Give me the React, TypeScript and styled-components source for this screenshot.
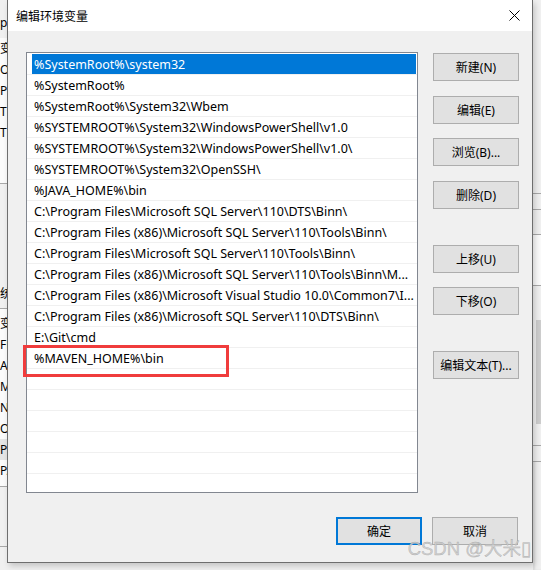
import styled, { createGlobalStyle } from "styled-components";

const GlobalStyle = createGlobalStyle`
  html, body {
    margin: 0;
    padding: 0;
  }
  body {
    width: 541px;
    height: 570px;
    overflow: hidden;
    background: #f0f0f0;
    font-family: "Noto Sans", "Noto Sans CJK SC", sans-serif;
    font-size: 12px;
    color: #000;
  }
  * {
    box-sizing: border-box;
  }
`;

const paths = [
  "%SystemRoot%\\system32",
  "%SystemRoot%",
  "%SystemRoot%\\System32\\Wbem",
  "%SYSTEMROOT%\\System32\\WindowsPowerShell\\v1.0",
  "%SYSTEMROOT%\\System32\\WindowsPowerShell\\v1.0\\",
  "%SYSTEMROOT%\\System32\\OpenSSH\\",
  "%JAVA_HOME%\\bin",
  "C:\\Program Files\\Microsoft SQL Server\\110\\DTS\\Binn\\",
  "C:\\Program Files (x86)\\Microsoft SQL Server\\110\\Tools\\Binn\\",
  "C:\\Program Files\\Microsoft SQL Server\\110\\Tools\\Binn\\",
  "C:\\Program Files (x86)\\Microsoft SQL Server\\110\\Tools\\Binn\\M...",
  "C:\\Program Files (x86)\\Microsoft Visual Studio 10.0\\Common7\\I...",
  "C:\\Program Files (x86)\\Microsoft SQL Server\\110\\DTS\\Binn\\",
  "E:\\Git\\cmd",
  "%MAVEN_HOME%\\bin",
];

const ROW_COUNT = 21;

function EditEnvDialog() {
  const rows = Array.from({ length: ROW_COUNT }, (_, i) => paths[i] ?? "");

  return (
    <Dialog>
      <TitleBar>
        <Title>编辑环境变量</Title>
        <CloseButton aria-label="close">
          <svg width="11" height="11" viewBox="0 0 11 11">
            <path d="M0.5 0.5 L10.5 10.5 M10.5 0.5 L0.5 10.5" stroke="#000" strokeWidth="1" fill="none" />
          </svg>
        </CloseButton>
      </TitleBar>
      <Body>
        <MainRow>
          <ListFrame>
            <ListBox>
              {rows.map((text, i) => (
                <Row key={i}>
                  <RowText $selected={i === 0}>{text}</RowText>
                </Row>
              ))}
            </ListBox>
            <Marker />
          </ListFrame>
          <SideButtons>
            <Button>新建(N)</Button>
            <Button>编辑(E)</Button>
            <Button>浏览(B)...</Button>
            <Button>删除(D)</Button>
            <Button $pushed>上移(U)</Button>
            <Button>下移(O)</Button>
            <Button $pushed>编辑文本(T)...</Button>
          </SideButtons>
        </MainRow>
        <Footer>
          <Button $primary>确定</Button>
          <Button>取消</Button>
        </Footer>
      </Body>
      <Watermark>CSDN @大米▯</Watermark>
    </Dialog>
  );
}

// bits of the window lying behind the dialog
const leftTop = ["变", "O", "Pa", "TE", "TN"];
const leftBottom = ["变", "FP", "A", "M", "N", "O", "Pa", "PA"];

function App() {
  return (
    <>
      <GlobalStyle />
      <Screen>
        <LeftPeek>
          <PeekSection $height={38} $pad={12}>
            <PeekRow>p</PeekRow>
          </PeekSection>
          <PeekSection $height={146} $pad={0} $white $line>
            {leftTop.map((t, i) => (
              <PeekRow key={i}>{t}</PeekRow>
            ))}
          </PeekSection>
          <PeekSection $height={125} $pad={99} $line>
            <PeekRow>统</PeekRow>
          </PeekSection>
          <PeekSection $height={178} $pad={4} $white $line>
            {leftBottom.map((t, i) => (
              <PeekRow key={i} $hover={t === "Pa"}>
                {t}
              </PeekRow>
            ))}
          </PeekSection>
          <PeekSection $height={60} $pad={0} $line />
        </LeftPeek>
        <EditEnvDialog />
        <RightPeek>
          <PeekSection $height={194} $pad={0} $line />
          <PeekSection $height={16} $pad={0} $line />
          <PeekSection $height={25} $pad={0} $line />
          <PeekSection $height={51} $pad={0} $white $line />
          <ScrollTrack>
            <ScrollThumb />
          </ScrollTrack>
          <PeekSection $height={16} $pad={0} $line />
        </RightPeek>
      </Screen>
    </>
  );
}

const Screen = styled.div`
  display: flex;
  width: 541px;
  height: 570px;
  overflow: hidden;
`;

const LeftPeek = styled.div`
  width: 7px;
  flex-shrink: 0;
  overflow: hidden;
  display: flex;
  flex-direction: column;
`;

const RightPeek = styled.div`
  width: 8px;
  flex-shrink: 0;
  overflow: hidden;
  display: flex;
  flex-direction: column;
  box-shadow: inset 2px 0 2px rgba(0, 0, 0, 0.08);
`;

const PeekSection = styled.div<{ $height: number; $pad: number; $white?: boolean; $line?: boolean }>`
  height: ${(p) => p.$height}px;
  flex-shrink: 0;
  padding-top: ${(p) => p.$pad}px;
  background: ${(p) => (p.$white ? "#fbfbfb" : "#f0f0f0")};
  border-bottom: ${(p) => (p.$line ? "1px solid #a8a8a8" : "none")};
`;

const PeekRow = styled.div<{ $hover?: boolean }>`
  height: 21px;
  line-height: 21px;
  white-space: nowrap;
  font-size: 12px;
  color: #000;
  background: ${(p) => (p.$hover ? "#e5e5e5" : "transparent")};
`;

const ScrollTrack = styled.div`
  height: 160px;
  flex-shrink: 0;
  background: #f0f0f0;
  padding: 34px 0 0 3px;
  border-bottom: 1px solid #a8a8a8;
`;

const ScrollThumb = styled.div`
  width: 5px;
  height: 104px;
  background: #cdcdcd;
`;

const Dialog = styled.div`
  position: relative;
  width: 526px;
  height: 563px;
  flex-shrink: 0;
  display: flex;
  flex-direction: column;
  background: #f0f0f0;
  border: 1px solid #6e6e6e;
  border-top: none;
  box-shadow: 2px 3px 6px rgba(0, 0, 0, 0.18);
`;

const TitleBar = styled.div`
  height: 31px;
  flex-shrink: 0;
  display: flex;
  align-items: center;
  justify-content: space-between;
  background: #fff;
  padding: 0 8px 0 8px;
`;

const Title = styled.span`
  font-family: "Noto Sans CJK SC", sans-serif;
  font-size: 12px;
  color: #000;
`;

const CloseButton = styled.div`
  width: 20px;
  height: 20px;
  display: flex;
  align-items: center;
  justify-content: center;
  svg {
    display: block;
  }
`;

const Body = styled.div`
  flex: 1;
  display: flex;
  flex-direction: column;
  padding: 21px 13px 0 18px;
`;

const MainRow = styled.div`
  display: flex;
  gap: 15px;
`;

const ListFrame = styled.div`
  position: relative;
  width: 392px;
  height: 441px;
  flex-shrink: 0;
`;

const ListBox = styled.div`
  width: 100%;
  height: 100%;
  overflow: hidden;
  background: #fff;
  border: 1px solid #828790;
  padding-top: 1px;
`;

const Row = styled.div`
  height: 21px;
  padding: 0 1px 1px 5px;
  border-bottom: 1px solid #f0f0f0;
`;

const RowText = styled.div<{ $selected?: boolean }>`
  height: 20px;
  line-height: 21px;
  padding-left: 2px;
  white-space: nowrap;
  overflow: hidden;
  font-size: 12.5px;
  color: ${(p) => (p.$selected ? "#fff" : "#000")};
  background: ${(p) => (p.$selected ? "#0078d7" : "transparent")};
`;

const Marker = styled.div`
  position: absolute;
  left: -3px;
  top: 293px;
  width: 206px;
  height: 32px;
  border: 3px solid #f03c3c;
  pointer-events: none;
`;

const SideButtons = styled.div`
  display: flex;
  flex-direction: column;
  gap: 14.5px;
  padding-top: 1px;
`;

const Button = styled.button<{ $primary?: boolean; $pushed?: boolean }>`
  width: 86px;
  height: 28px;
  margin: 0;
  margin-top: ${(p) => (p.$pushed ? "21.5px" : "0")};
  padding: 0;
  background: #e1e1e1;
  border: ${(p) => (p.$primary ? "2px solid #0078d7" : "1px solid #adadad")};
  font-family: "Noto Sans", "Noto Sans CJK SC", sans-serif;
  font-size: 12px;
  color: #000;
  white-space: nowrap;
`;

const Footer = styled.div`
  display: flex;
  justify-content: flex-end;
  gap: 10px;
  margin-top: 24px;
  padding-right: 1px;
`;

const Watermark = styled.div`
  position: absolute;
  right: 1px;
  bottom: 2px;
  font-family: "Liberation Sans", "Noto Sans CJK SC", sans-serif;
  font-size: 18.5px;
  color: rgba(205, 205, 205, 0.9);
  -webkit-text-stroke: 0.4px rgba(140, 140, 140, 0.6);
  white-space: nowrap;
  pointer-events: none;
`;

export default App;
